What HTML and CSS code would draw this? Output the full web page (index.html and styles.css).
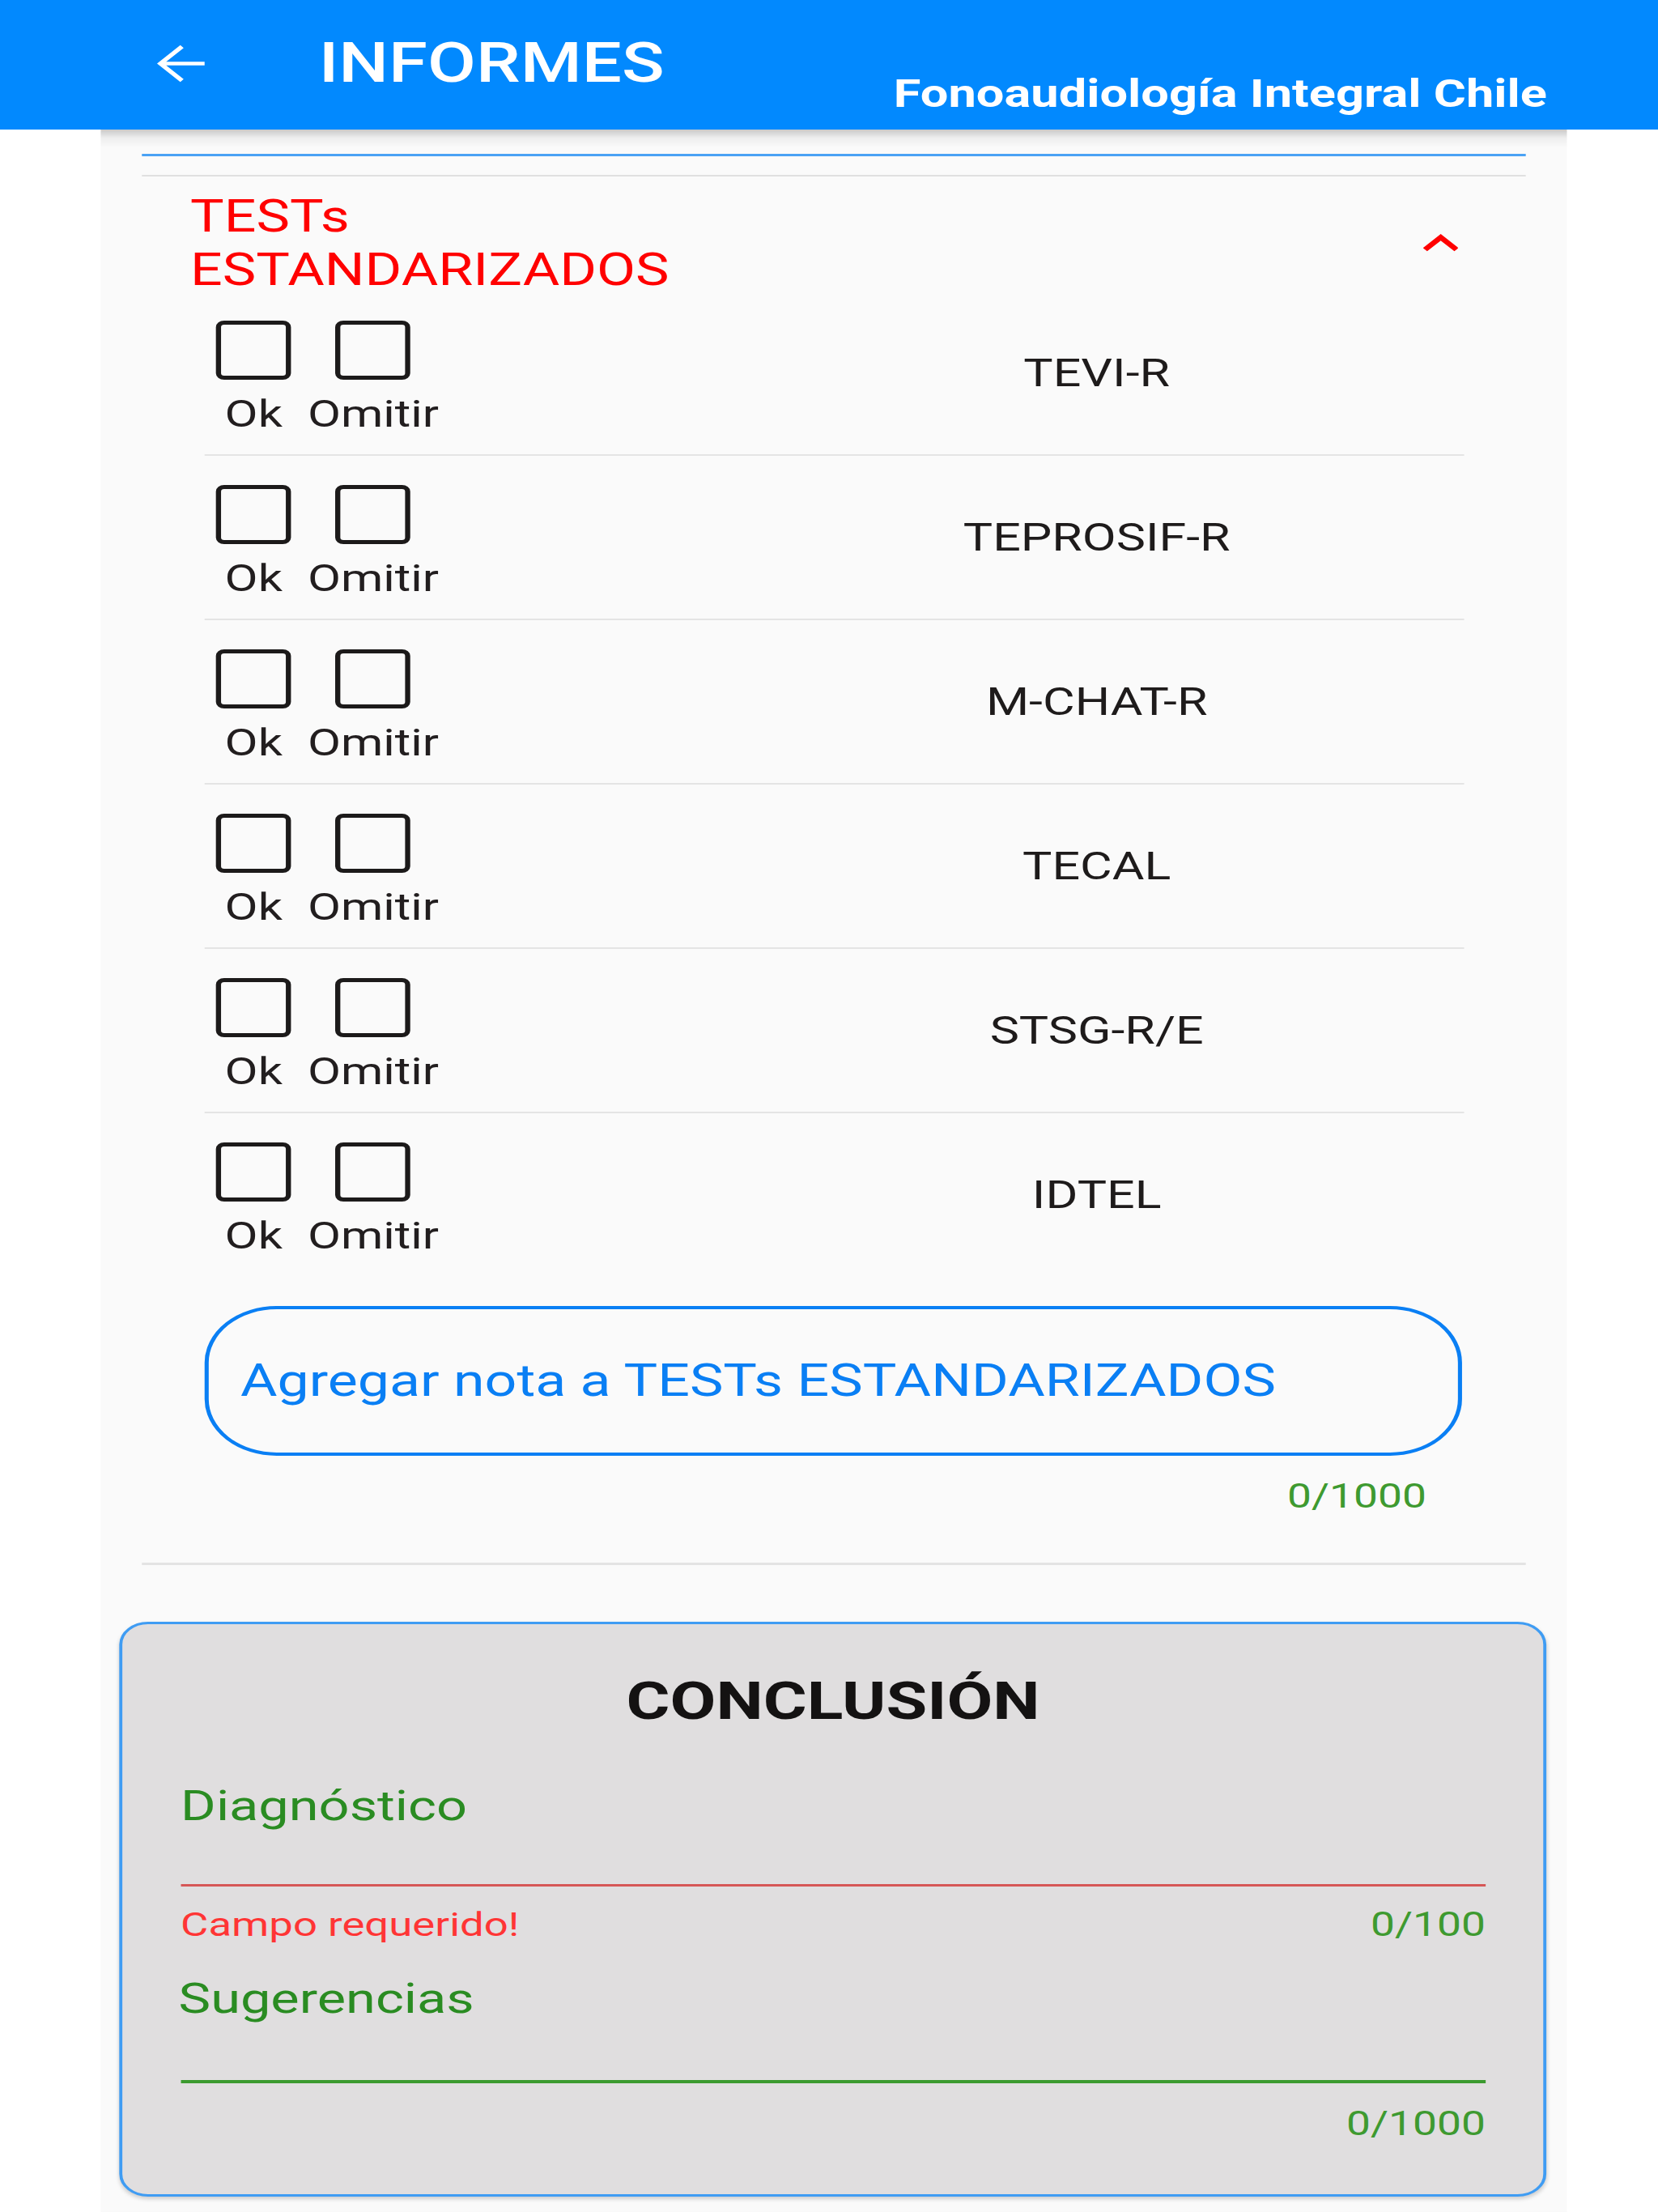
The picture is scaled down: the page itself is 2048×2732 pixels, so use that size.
FILE: index.html
```html
<!DOCTYPE html>
<html lang="es">
<head>
<meta charset="utf-8">
<title>Informes</title>
<link rel="stylesheet" href="styles.css">
</head>
<body>
<div class="app">
  <header class="appbar">
    <svg class="back" viewBox="0 0 50 47" aria-hidden="true"><path d="M49 23.5H6M27 2.5L6 23.5 27 44.5" fill="none" stroke="#fff" stroke-width="4.6"/></svg>
    <h1 class="title">INFORMES</h1>
    <div class="brand">Fonoaudiología Integral Chile</div>
  </header>
  <main class="content">
    <div class="rule rule-blue"></div>
    <div class="rule rule-gray"></div>
    <section class="tile">
      <div class="tile-head">
        <h2 class="tile-title">TESTs ESTANDARIZADOS</h2>
        <svg class="chev" viewBox="6 8 12 7.41" preserveAspectRatio="none" aria-hidden="true"><path d="M12 8l-6 6 1.41 1.41L12 10.83l4.59 4.58L18 14z" fill="#ff0000"/></svg>
      </div>
      <ul class="tests">
        <li class="test">
          <div class="checks">
            <div class="check check-ok"><span class="box"></span><span class="lbl">Ok</span></div>
            <div class="check check-omit"><span class="box"></span><span class="lbl">Omitir</span></div>
          </div>
          <span class="name">TEVI-R</span>
        </li>
        <li class="test">
          <div class="checks">
            <div class="check check-ok"><span class="box"></span><span class="lbl">Ok</span></div>
            <div class="check check-omit"><span class="box"></span><span class="lbl">Omitir</span></div>
          </div>
          <span class="name">TEPROSIF-R</span>
        </li>
        <li class="test">
          <div class="checks">
            <div class="check check-ok"><span class="box"></span><span class="lbl">Ok</span></div>
            <div class="check check-omit"><span class="box"></span><span class="lbl">Omitir</span></div>
          </div>
          <span class="name">M-CHAT-R</span>
        </li>
        <li class="test">
          <div class="checks">
            <div class="check check-ok"><span class="box"></span><span class="lbl">Ok</span></div>
            <div class="check check-omit"><span class="box"></span><span class="lbl">Omitir</span></div>
          </div>
          <span class="name">TECAL</span>
        </li>
        <li class="test">
          <div class="checks">
            <div class="check check-ok"><span class="box"></span><span class="lbl">Ok</span></div>
            <div class="check check-omit"><span class="box"></span><span class="lbl">Omitir</span></div>
          </div>
          <span class="name">STSG-R/E</span>
        </li>
        <li class="test">
          <div class="checks">
            <div class="check check-ok"><span class="box"></span><span class="lbl">Ok</span></div>
            <div class="check check-omit"><span class="box"></span><span class="lbl">Omitir</span></div>
          </div>
          <span class="name">IDTEL</span>
        </li>
      </ul>
      <div class="note">Agregar nota a TESTs ESTANDARIZADOS</div>
      <div class="counter">0/1000</div>
    </section>
    <div class="rule rule-gray2"></div>
    <section class="card">
      <h2 class="card-title">CONCLUSIÓN</h2>
      <div class="field-label">Diagnóstico</div>
      <div class="field-line field-line-error"></div>
      <div class="helper"><span class="error">Campo requerido!</span><span class="count">0/100</span></div>
      <div class="field-label field-label-sug">Sugerencias</div>
      <div class="field-line field-line-ok"></div>
      <div class="helper helper-end"><span class="count">0/1000</span></div>
    </section>
  </main>
</div>
</body>
</html>
```
FILE: styles.css
```css
html, body {
  margin: 0;
  padding: 0;
  background: #ffffff;
  overflow: hidden;
}

body {
  font-family: Roboto, "Noto Sans", "Liberation Sans", sans-serif;
  width: 2048px;
  height: 2732px;
}

/* The captured phone screen is stretched horizontally by ~1.27 */
.app {
  width: 1612.6px;
  height: 2732px;
  transform: scaleX(1.27);
  transform-origin: 0 0;
  display: flex;
  flex-direction: column;
}

.appbar {
  height: 160px;
  flex: none;
  background: #0289fe;
  display: flex;
  align-items: flex-start;
  color: #ffffff;
}

.back {
  width: 50px;
  height: 47px;
  margin: 55px 0 0 150px;
  flex: none;
}

.title {
  margin: 44.4px 0 0 110px;
  font-size: 68.5px;
  line-height: 68px;
  font-weight: 500;
}

.brand {
  margin: 92px 108px 0 auto;
  font-size: 48.3px;
  line-height: 48px;
  font-weight: 700;
}

.content {
  margin-left: 97.6px;
  width: 1426.8px;
  flex: 1;
  background: linear-gradient(to bottom, rgba(0, 0, 0, 0.2), rgba(0, 0, 0, 0.05) 10px, rgba(0, 0, 0, 0) 22px), #fafafa;
}

.rule {
  margin-left: 40px;
  margin-right: 40px;
}

.rule-blue {
  margin-top: 30px;
  height: 3px;
  background: #4aa2f4;
}

.rule-gray {
  margin-top: 23px;
  height: 2px;
  background: #e0e0e0;
}

.rule-gray2 {
  margin-top: 61.4px;
  height: 3px;
  background: #e3e3e3;
}

.tile-head {
  display: flex;
  align-items: center;
  justify-content: space-between;
  padding: 16px 106px 0 87.5px;
}

.tile-title {
  margin: 0;
  max-width: 520px;
  font-size: 55px;
  line-height: 66px;
  font-weight: 400;
  color: #ff0000;
}

.chev {
  width: 34.6px;
  height: 21.3px;
  flex: none;
}

.tests {
  list-style: none;
  margin: -6px 100px 0 101.6px;
  padding: 0;
}

.test {
  display: flex;
  height: 201px;
  border-bottom: 2px solid #e4e4e4;
}

.test:last-child {
  border-bottom: none;
}

.checks {
  display: flex;
  align-self: flex-start;
  padding: 36px 0 0 11px;
}

.check {
  display: flex;
  flex-direction: column;
  align-items: center;
}

.check-ok {
  width: 73px;
}

.check-omit {
  width: 126px;
  margin-left: 16.8px;
}

.box {
  width: 73px;
  height: 73px;
  box-sizing: border-box;
  border: 5.5px solid #1c1a1a;
  border-radius: 8px;
}

.lbl {
  margin-top: 18.4px;
  font-size: 47px;
  line-height: 47px;
  color: #221e1f;
  white-space: nowrap;
}

.name {
  flex: 1;
  align-self: center;
  padding-left: 283px;
  text-align: center;
  font-size: 48px;
  line-height: 48px;
  color: #1e1b1b;
}

.note {
  margin: 37px 102px 0 101.6px;
  height: 185px;
  box-sizing: border-box;
  border: 4px solid #0a7ff4;
  border-radius: 70px;
  display: flex;
  align-items: center;
  padding-left: 30.6px;
  font-size: 55px;
  line-height: 55px;
  color: #0a7ff4;
  white-space: nowrap;
}

.counter {
  margin-top: 28.6px;
  padding-right: 137px;
  text-align: right;
  font-size: 42px;
  line-height: 42px;
  color: #3e9a30;
}

.card {
  margin: 70px 20.5px 0 18.1px;
  padding: 64px 56px 66px 57px;
  border: 3px solid #3f9cf3;
  border-radius: 28px;
  background: #e0dedf;
  box-shadow: 0 3px 5px rgba(0, 0, 0, 0.18);
}

.card-title {
  margin: 0;
  text-align: center;
  font-size: 65px;
  line-height: 63px;
  font-weight: 700;
  color: #141212;
}

.field-label {
  margin-top: 71.2px;
  font-size: 52.5px;
  line-height: 52px;
  color: #2a8c22;
}

.field-label-sug {
  margin-top: 44.6px;
  margin-left: -2px;
}

.field-line {
  margin-top: 70.8px;
}

.field-line-error {
  height: 3px;
  background: #d65656;
}

.field-line-ok {
  margin-top: 74.8px;
  height: 4px;
  background: #3c9a2f;
}

.helper {
  display: flex;
  justify-content: space-between;
  margin-top: 25.6px;
  font-size: 42px;
  line-height: 42px;
}

.helper .error {
  font-size: 41.5px;
}

.helper-end {
  justify-content: flex-end;
  margin-top: 29px;
}

.error {
  color: #ff3535;
}

.count {
  color: #3e9a30;
}
```
